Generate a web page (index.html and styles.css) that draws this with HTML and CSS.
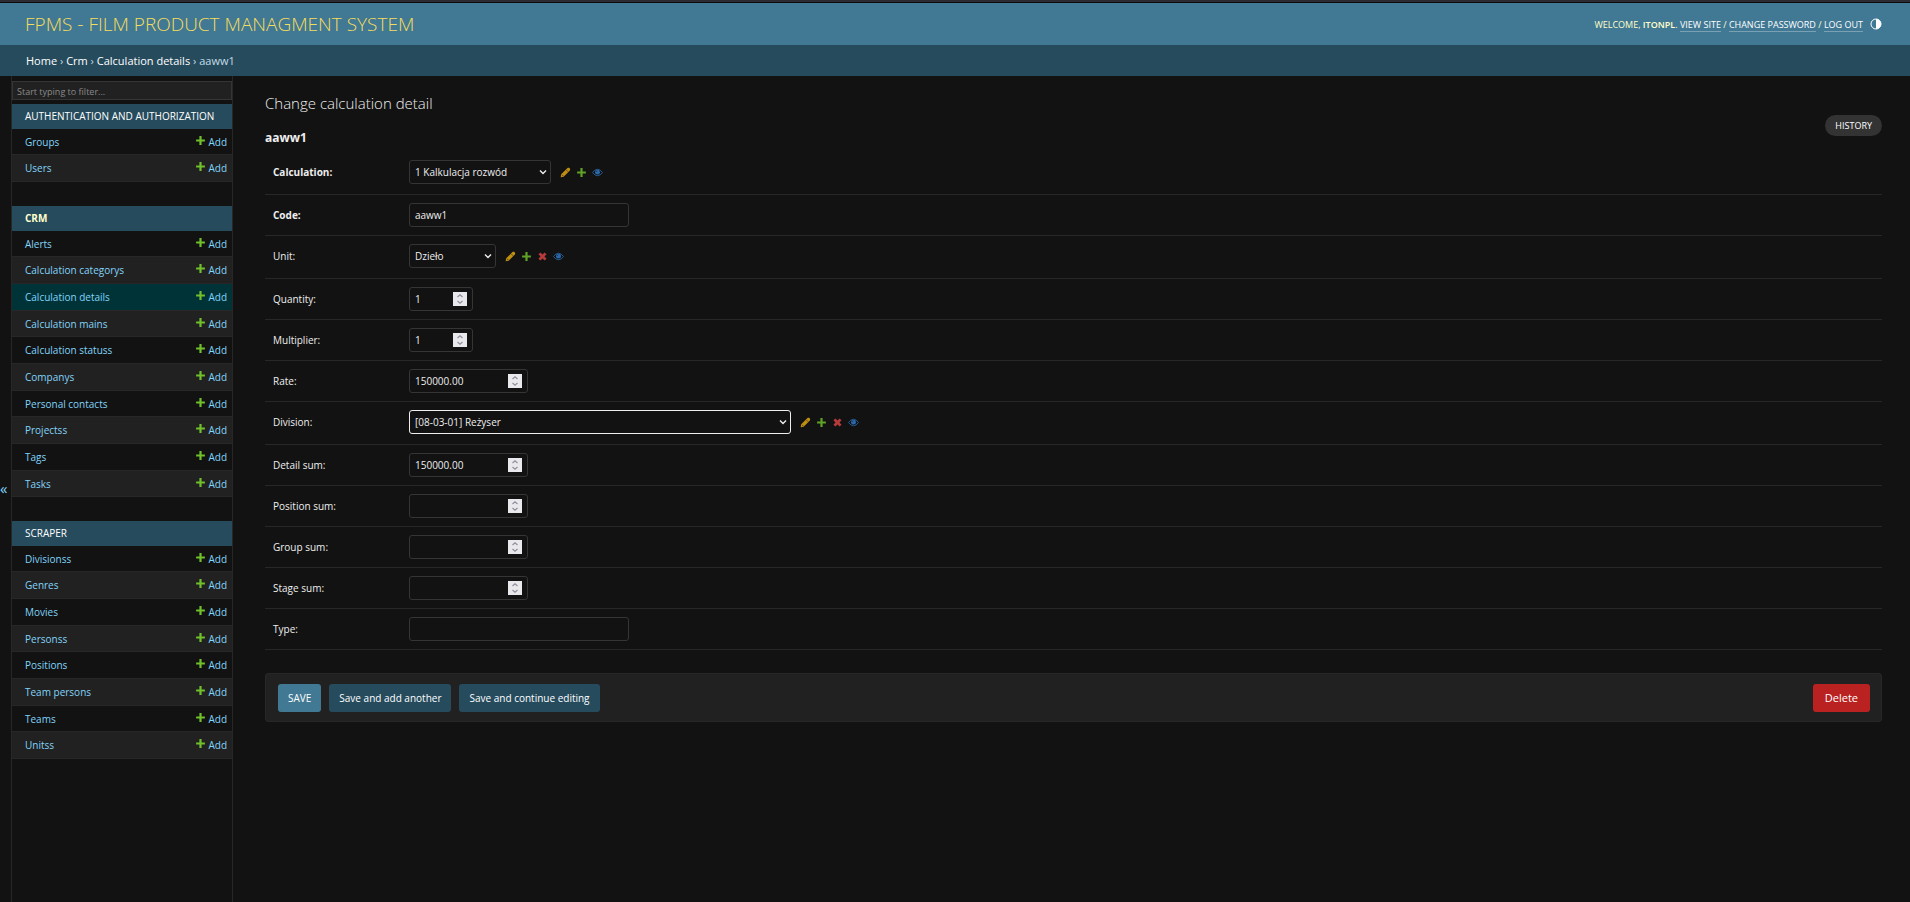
FILE: index.html
```html
<!DOCTYPE html>
<html lang="en">
<head>
  <meta charset="UTF-8">
  <meta name="viewport" content="width=device-width, initial-scale=1.0">
  <title>aaww1 | Change calculation detail</title>
  <link rel="stylesheet" href="styles.css">
</head>
<body>
  <svg class="sprite" aria-hidden="true">
    <symbol id="icon-add" viewBox="0 0 10 10"><path d="M4 1h2v3h3v2H6v3H4V6H1V4h3z"/></symbol>
    <symbol id="icon-edit" viewBox="0 0 10 10"><path d="M.6 9.4l.5-2.7 5.5-5.5c.6-.6 1.6-.6 2.2 0s.6 1.6 0 2.2L3.300 8.900z"/><path d="M6 3l1.200 1.200M2 7.200l1 1" stroke="#121212" stroke-width=".6"/></symbol>
    <symbol id="icon-delete" viewBox="0 0 10 10"><path d="M1.300 3l1.800-1.700L5 3.200l1.900-1.900L8.700 3 6.800 5l1.900 2-1.800 1.700L5 6.800 3.100 8.700 1.300 7l1.900-2z"/></symbol>
    <symbol id="icon-view" viewBox="0 0 12 10"><path d="M.5 5Q3 1.500 6 1.500T11.500 5Q9 8.500 6 8.500T.5 5z" fill="none" stroke="currentColor" stroke-width=".9"/><circle cx="6" cy="4.600" r="2.700"/><path d="M4.700 4.200q.1-1 1.100-1.100" fill="none" stroke="#121212" stroke-width=".6"/></symbol>
  </svg>

  <div class="window-edge"></div>
  <header id="header">
    <div class="site-name"><a href="#">FPMS - FILM PRODUCT MANAGMENT SYSTEM</a></div>
    <div class="user-tools">
      <span>Welcome, <strong>itonpl</strong>. <a href="#">View site</a> / <a href="#">Change password</a> / <a href="#">Log out</a></span>
      <button class="theme-toggle" type="button" aria-label="Toggle theme">
        <svg viewBox="0 0 12 12"><circle cx="6" cy="6" r="5" fill="none" stroke="#fff" stroke-width="1"/><path d="M6 1a5 5 0 0 1 0 10z" fill="#fff"/></svg>
      </button>
    </div>
  </header>

  <nav class="breadcrumbs" aria-label="Breadcrumbs">
    <a href="#">Home</a> › <a href="#">Crm</a> › <a href="#">Calculation details</a> › aaww1
  </nav>

  <div class="main">
    <button class="nav-toggle" type="button" aria-label="Toggle navigation">«</button>

    <nav class="sidebar" aria-label="Sidebar">
      <input class="nav-filter" type="search" placeholder="Start typing to filter..." aria-label="Filter navigation items">

      <table class="module">
        <caption><a href="#">Authentication and Authorization</a></caption>
        <tbody>
          <tr><th scope="row"><a href="#">Groups</a></th><td><a class="addlink" href="#"><svg><use href="#icon-add"/></svg>Add</a></td></tr>
          <tr><th scope="row"><a href="#">Users</a></th><td><a class="addlink" href="#"><svg><use href="#icon-add"/></svg>Add</a></td></tr>
        </tbody>
      </table>

      <table class="module current-app">
        <caption><a href="#">Crm</a></caption>
        <tbody>
          <tr><th scope="row"><a href="#">Alerts</a></th><td><a class="addlink" href="#"><svg><use href="#icon-add"/></svg>Add</a></td></tr>
          <tr><th scope="row"><a href="#">Calculation categorys</a></th><td><a class="addlink" href="#"><svg><use href="#icon-add"/></svg>Add</a></td></tr>
          <tr class="current-model"><th scope="row"><a href="#">Calculation details</a></th><td><a class="addlink" href="#"><svg><use href="#icon-add"/></svg>Add</a></td></tr>
          <tr><th scope="row"><a href="#">Calculation mains</a></th><td><a class="addlink" href="#"><svg><use href="#icon-add"/></svg>Add</a></td></tr>
          <tr><th scope="row"><a href="#">Calculation statuss</a></th><td><a class="addlink" href="#"><svg><use href="#icon-add"/></svg>Add</a></td></tr>
          <tr><th scope="row"><a href="#">Companys</a></th><td><a class="addlink" href="#"><svg><use href="#icon-add"/></svg>Add</a></td></tr>
          <tr><th scope="row"><a href="#">Personal contacts</a></th><td><a class="addlink" href="#"><svg><use href="#icon-add"/></svg>Add</a></td></tr>
          <tr><th scope="row"><a href="#">Projectss</a></th><td><a class="addlink" href="#"><svg><use href="#icon-add"/></svg>Add</a></td></tr>
          <tr><th scope="row"><a href="#">Tags</a></th><td><a class="addlink" href="#"><svg><use href="#icon-add"/></svg>Add</a></td></tr>
          <tr><th scope="row"><a href="#">Tasks</a></th><td><a class="addlink" href="#"><svg><use href="#icon-add"/></svg>Add</a></td></tr>
        </tbody>
      </table>

      <table class="module">
        <caption><a href="#">Scraper</a></caption>
        <tbody>
          <tr><th scope="row"><a href="#">Divisionss</a></th><td><a class="addlink" href="#"><svg><use href="#icon-add"/></svg>Add</a></td></tr>
          <tr><th scope="row"><a href="#">Genres</a></th><td><a class="addlink" href="#"><svg><use href="#icon-add"/></svg>Add</a></td></tr>
          <tr><th scope="row"><a href="#">Movies</a></th><td><a class="addlink" href="#"><svg><use href="#icon-add"/></svg>Add</a></td></tr>
          <tr><th scope="row"><a href="#">Personss</a></th><td><a class="addlink" href="#"><svg><use href="#icon-add"/></svg>Add</a></td></tr>
          <tr><th scope="row"><a href="#">Positions</a></th><td><a class="addlink" href="#"><svg><use href="#icon-add"/></svg>Add</a></td></tr>
          <tr><th scope="row"><a href="#">Team persons</a></th><td><a class="addlink" href="#"><svg><use href="#icon-add"/></svg>Add</a></td></tr>
          <tr><th scope="row"><a href="#">Teams</a></th><td><a class="addlink" href="#"><svg><use href="#icon-add"/></svg>Add</a></td></tr>
          <tr><th scope="row"><a href="#">Unitss</a></th><td><a class="addlink" href="#"><svg><use href="#icon-add"/></svg>Add</a></td></tr>
        </tbody>
      </table>
    </nav>

    <main class="content">
      <h1>Change calculation detail</h1>
      <div class="object-head">
        <h2>aaww1</h2>
        <a class="history" href="#">History</a>
      </div>

      <form>
        <div class="form-row related">
          <label class="required" for="id_calculation">Calculation:</label>
          <select id="id_calculation" class="w-medium"><option>1 Kalkulacja rozwód</option></select>
          <div class="related-links">
            <a class="change" href="#" aria-label="Change"><svg><use href="#icon-edit"/></svg></a>
            <a class="add" href="#" aria-label="Add"><svg><use href="#icon-add"/></svg></a>
            <a class="view" href="#" aria-label="View"><svg><use href="#icon-view"/></svg></a>
          </div>
        </div>
        <div class="form-row">
          <label class="required" for="id_code">Code:</label>
          <input id="id_code" class="w-text" type="text" value="aaww1">
        </div>
        <div class="form-row related">
          <label for="id_unit">Unit:</label>
          <select id="id_unit" class="w-small"><option>Dzieło</option></select>
          <div class="related-links">
            <a class="change" href="#" aria-label="Change"><svg><use href="#icon-edit"/></svg></a>
            <a class="add" href="#" aria-label="Add"><svg><use href="#icon-add"/></svg></a>
            <a class="delete" href="#" aria-label="Delete"><svg><use href="#icon-delete"/></svg></a>
            <a class="view" href="#" aria-label="View"><svg><use href="#icon-view"/></svg></a>
          </div>
        </div>
        <div class="form-row">
          <label for="id_quantity">Quantity:</label>
          <input id="id_quantity" class="w-int" type="number" value="1">
        </div>
        <div class="form-row">
          <label for="id_multiplier">Multiplier:</label>
          <input id="id_multiplier" class="w-int" type="number" value="1">
        </div>
        <div class="form-row">
          <label for="id_rate">Rate:</label>
          <input id="id_rate" class="w-decimal" type="number" step="0.01" value="150000.00">
        </div>
        <div class="form-row related">
          <label for="id_division">Division:</label>
          <select id="id_division" class="w-large focused"><option>[08-03-01] Reżyser</option></select>
          <div class="related-links">
            <a class="change" href="#" aria-label="Change"><svg><use href="#icon-edit"/></svg></a>
            <a class="add" href="#" aria-label="Add"><svg><use href="#icon-add"/></svg></a>
            <a class="delete" href="#" aria-label="Delete"><svg><use href="#icon-delete"/></svg></a>
            <a class="view" href="#" aria-label="View"><svg><use href="#icon-view"/></svg></a>
          </div>
        </div>
        <div class="form-row">
          <label for="id_detail_sum">Detail sum:</label>
          <input id="id_detail_sum" class="w-decimal" type="number" step="0.01" value="150000.00">
        </div>
        <div class="form-row">
          <label for="id_position_sum">Position sum:</label>
          <input id="id_position_sum" class="w-decimal" type="number" step="0.01">
        </div>
        <div class="form-row">
          <label for="id_group_sum">Group sum:</label>
          <input id="id_group_sum" class="w-decimal" type="number" step="0.01">
        </div>
        <div class="form-row">
          <label for="id_stage_sum">Stage sum:</label>
          <input id="id_stage_sum" class="w-decimal" type="number" step="0.01">
        </div>
        <div class="form-row">
          <label for="id_type">Type:</label>
          <input id="id_type" class="w-text" type="text">
        </div>

        <div class="submit-row">
          <button class="default" type="submit">SAVE</button>
          <button type="submit">Save and add another</button>
          <button type="submit">Save and continue editing</button>
          <a class="deletelink" href="#">Delete</a>
        </div>
      </form>
    </main>
  </div>
</body>
</html>
```
FILE: styles.css
```css
:root {
  --primary: #417893;
  --secondary: #264b5d;
  --body-bg: #121212;
  --darkened-bg: #212121;
  --hairline: #272727;
  --border: #353535;
  --link: #81d4fa;
  --fg: #eeeeee;
}

* {
  box-sizing: border-box;
}

body {
  margin: 0;
  min-height: 100vh;
  display: flex;
  flex-direction: column;
  background: var(--body-bg);
  color: var(--fg);
  font-family: "Open Sans", "Noto Sans", sans-serif;
  font-size: 10px;
}

a {
  color: var(--link);
  text-decoration: none;
}

input, select, button {
  font-family: inherit;
  font-size: 10px;
}

svg {
  display: block;
  fill: currentColor;
}

.sprite {
  display: none;
}

/* HEADER */
.window-edge {
  height: 3px;
  background: #2b2a33;
  border-bottom: 1px solid #0c0c0d;
}

#header {
  display: flex;
  justify-content: space-between;
  align-items: center;
  height: 42px;
  padding: 0 28px 0 25px;
  background: var(--primary);
  color: #ffffcc;
}

.site-name {
  font-size: 19px;
  font-weight: 300;
}

.site-name a {
  color: #f5dd5d;
}

.user-tools {
  display: flex;
  align-items: center;
  gap: 7px;
  font-size: 9px;
  text-transform: uppercase;
}

.user-tools strong {
  font-weight: 600;
}

.user-tools a {
  color: #fff;
  border-bottom: 1px solid rgba(255, 255, 255, 0.3);
}

.theme-toggle {
  padding: 0;
  border: none;
  background: none;
}

.theme-toggle svg {
  width: 12px;
  height: 12px;
}

.breadcrumbs {
  height: 31px;
  padding: 0 26px;
  background: var(--secondary);
  color: #c4dce8;
  font-size: 11px;
  line-height: 31px;
}

.breadcrumbs a {
  color: #fff;
}

/* SIDEBAR */
.main {
  flex: 1;
  display: flex;
}

.nav-toggle {
  width: 11px;
  padding: 0 5px 3px 0;
  border: none;
  background: var(--body-bg);
  color: var(--link);
  font-size: 15px;
}

.sidebar {
  width: 222px;
  flex-shrink: 0;
  padding-top: 5px;
  border-left: 1px solid var(--hairline);
  border-right: 1px solid var(--hairline);
}

.nav-filter {
  display: block;
  width: 100%;
  height: 19px;
  margin-bottom: 4px;
  padding: 1px 4px 0;
  border: 1px solid var(--border);
  background: var(--darkened-bg);
  color: var(--fg);
  font-size: 9px;
}

.nav-filter::placeholder {
  color: #8a8a8a;
}

.module {
  width: 100%;
  margin-bottom: 24px;
  border-spacing: 0;
}

.module caption {
  height: 25px;
  padding: 0 13px;
  background: var(--secondary);
  font-size: 10px;
  line-height: 25px;
  text-align: left;
  text-transform: uppercase;
  white-space: nowrap;
}

.module caption a {
  color: #fff;
}

.current-app caption a {
  color: #ffffcc;
  font-weight: 700;
}

.module tr {
  height: 27px;
}

.module tr:nth-child(3n+1) {
  height: 26px;
}

.module tr:nth-child(even) {
  background: var(--darkened-bg);
}

.module .current-model {
  background: #003338;
}

.module th,
.module td {
  padding: 0;
  border-bottom: 1px solid var(--hairline);
  line-height: 16px;
}

.module th {
  padding-left: 13px;
  font-weight: 500;
  text-align: left;
}

.module td {
  width: 60px;
  padding-right: 5px;
}

.addlink {
  display: flex;
  justify-content: flex-end;
  gap: 2px;
}

.addlink svg {
  width: 11px;
  height: 11px;
  margin-top: 1px;
  color: #70bf2b;
}

/* CONTENT */
.content {
  flex: 1;
  padding: 16px 28px 32px 32px;
}

h1 {
  margin: 0 0 13px;
  font-size: 15px;
  font-weight: 300;
  line-height: 22px;
}

.object-head {
  display: flex;
  justify-content: space-between;
  align-items: flex-start;
  height: 25px;
}

h2 {
  margin: 0;
  font-size: 12px;
  font-weight: 700;
  line-height: 22px;
}

.history {
  margin-top: -12px;
  padding: 0 10px;
  border-radius: 11px;
  background: #333;
  color: #fff;
  font-size: 9px;
  line-height: 21px;
  text-transform: uppercase;
}

.form-row {
  display: flex;
  align-items: center;
  padding: 8px;
  border-bottom: 1px solid var(--hairline);
}

.form-row.related {
  padding-bottom: 10px;
}

.form-row label {
  width: 136px;
}

.form-row label.required {
  font-weight: 700;
}

.form-row input,
.form-row select {
  height: 24px;
  padding: 0 5px;
  border: 1px solid var(--border);
  border-radius: 3px;
  background: var(--body-bg);
  color: var(--fg);
}

.form-row select {
  appearance: none;
  background: var(--body-bg) url("data:image/svg+xml,%3Csvg xmlns='http://www.w3.org/2000/svg' width='8' height='6'%3E%3Cpath d='M1 1.500l3 3 3-3' fill='none' stroke='%23eee' stroke-width='1.400'/%3E%3C/svg%3E") no-repeat right 3px center;
}

.form-row select.focused {
  border-color: var(--fg);
}

.form-row input[type="number"]::-webkit-inner-spin-button {
  appearance: none;
  width: 14px;
  height: 14px;
  opacity: 1;
  background: #e9e9ed url("data:image/svg+xml,%3Csvg xmlns='http://www.w3.org/2000/svg' width='14' height='14'%3E%3Cpath d='M4.500 5L7 2.700 9.500 5M4.500 9L7 11.300 9.500 9' fill='none' stroke='%238f8f9d' stroke-width='1.200'/%3E%3C/svg%3E") no-repeat center;
}

.form-row .w-int { width: 64px; }
.form-row .w-small { width: 87px; }
.form-row .w-decimal { width: 119px; }
.form-row .w-medium { width: 142px; }
.form-row .w-text { width: 220px; }
.form-row .w-large { width: 382px; }

.related-links {
  display: flex;
  gap: 5px;
  margin-left: 9px;
  padding-top: 1px;
}

.related-links svg {
  width: 11px;
  height: 11px;
}

.change { color: #bf8f12; }
.add { color: #5fa225; }
.delete { color: #b53a3a; }
.view { color: #2b68ab; }

.submit-row {
  display: flex;
  gap: 8px;
  margin-top: 23px;
  padding: 10px 11px 9px 12px;
  border: 1px solid var(--hairline);
  border-radius: 3px;
  background: var(--darkened-bg);
}

.submit-row button,
.deletelink {
  height: 28px;
  padding: 0 10px;
  border: none;
  border-radius: 3px;
  background: var(--secondary);
  color: #fff;
}

.submit-row .default {
  background: var(--primary);
}

.deletelink {
  margin-left: auto;
  padding: 0 12px;
  background: #ba2121;
  font-size: 11px;
  line-height: 28px;
}
```
